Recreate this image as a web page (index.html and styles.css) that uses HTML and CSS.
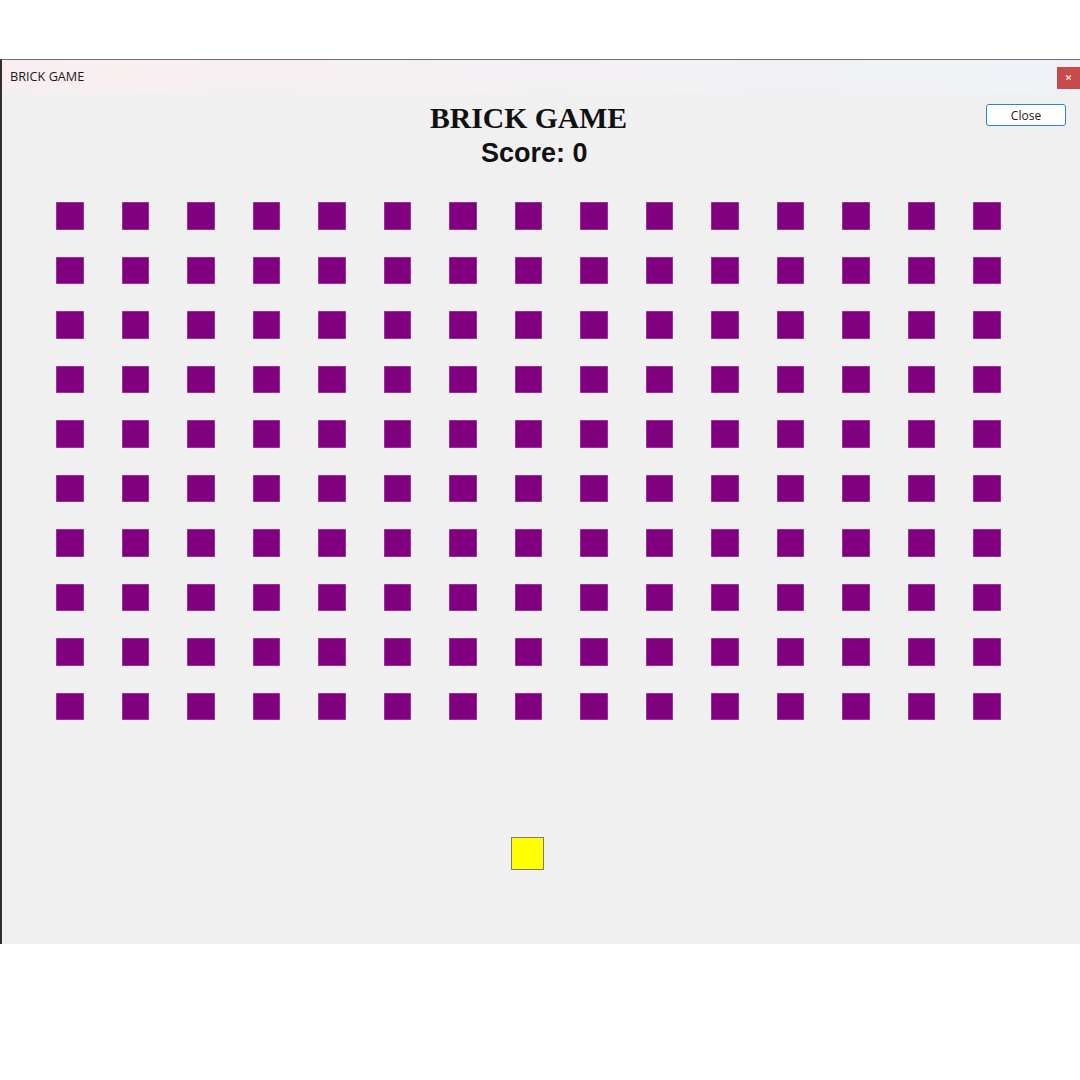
FILE: index.html
```html
<!DOCTYPE html>
<html>
<head>
<meta charset="utf-8">
<link rel="stylesheet" href="styles.css">
</head>
<body>
<div class="page">
  <div class="window">
    <div class="titlebar">
      <span class="caption">BRICK GAME</span>
      <span class="xbtn">&#x2715;</span>
    </div>
    <div class="client">
      <div class="header">
        <div class="heading">
          <div class="title">BRICK GAME</div>
          <div class="score">Score: 0</div>
        </div>
        <button class="closebtn">Close</button>
      </div>
      <div class="bricks" id="bricks"></div>
      <div class="paddle"></div>
    </div>
  </div>
</div>
<script src="script.js"></script>
</body>
</html>
```

FILE: script.js
```js
var g = document.getElementById('bricks');
for (var i = 0; i < 150; i++) {
  var d = document.createElement('div');
  d.className = 'brick';
  g.appendChild(d);
}
```

FILE: styles.css
```css
html, body {
  margin: 0;
  padding: 0;
  background: #ffffff;
}
.page {
  padding-top: 59px;
}
.window {
  height: 885px;
  box-sizing: border-box;
  border-top: 1px solid #707070;
  border-left: 2px solid #2e2e2e;
  display: flex;
  flex-direction: column;
}
.titlebar {
  height: 33px;
  flex: none;
  display: flex;
  justify-content: space-between;
  align-items: flex-start;
  background: linear-gradient(90deg, #f8eeef 0%, #f3f0f3 50%, #eef2f6 100%);
}
.caption {
  font-family: "Open Sans", "Noto Sans", sans-serif;
  font-size: 12.7px;
  color: #1a1a1a;
  margin-left: 8px;
  margin-top: 7px;
  line-height: 18px;
}
.xbtn {
  width: 23px;
  height: 22px;
  margin-top: 7px;
  background: #c84b4b;
  color: #ffffff;
  font-family: "DejaVu Sans", sans-serif;
  font-size: 9px;
  font-weight: bold;
  display: flex;
  align-items: center;
  justify-content: center;
}
.client {
  flex: 1;
  background: #f0f0f0;
  display: flex;
  flex-direction: column;
}
.header {
  display: flex;
  align-items: flex-start;
}
.heading {
  display: flex;
  flex-direction: column;
}
.title {
  font-family: "Liberation Serif", serif;
  font-weight: bold;
  font-size: 29.7px;
  line-height: 34px;
  margin-top: 8px;
  margin-left: 428px;
  color: #111111;
  white-space: nowrap;
}
.score {
  font-family: "Liberation Sans", Arial, sans-serif;
  font-weight: bold;
  font-size: 27px;
  line-height: 30px;
  margin-top: 3px;
  margin-left: 479px;
  color: #111111;
  white-space: nowrap;
}
.closebtn {
  margin-left: auto;
  margin-right: 14px;
  margin-top: 11px;
  width: 80px;
  height: 22px;
  box-sizing: border-box;
  border: 1px solid #2b83d9;
  border-radius: 3px;
  background: #fdfdfd;
  font-family: "Open Sans", "Noto Sans", sans-serif;
  font-size: 12px;
  color: #1a1a1a;
  padding: 0;
}
.bricks {
  display: grid;
  grid-template-columns: repeat(15, 27.5px);
  grid-auto-rows: 27.5px;
  column-gap: 38px;
  row-gap: 27.06px;
  margin-left: 54px;
  margin-top: 34px;
}
.brick {
  background: #800080;
  box-shadow: inset 0 0 0 0.5px #b060b0;
}
.paddle {
  width: 33px;
  height: 33px;
  box-sizing: border-box;
  background: #ffff00;
  border: 1px solid #7a7a7a;
  margin-left: 509px;
  margin-top: 117px;
}
```
